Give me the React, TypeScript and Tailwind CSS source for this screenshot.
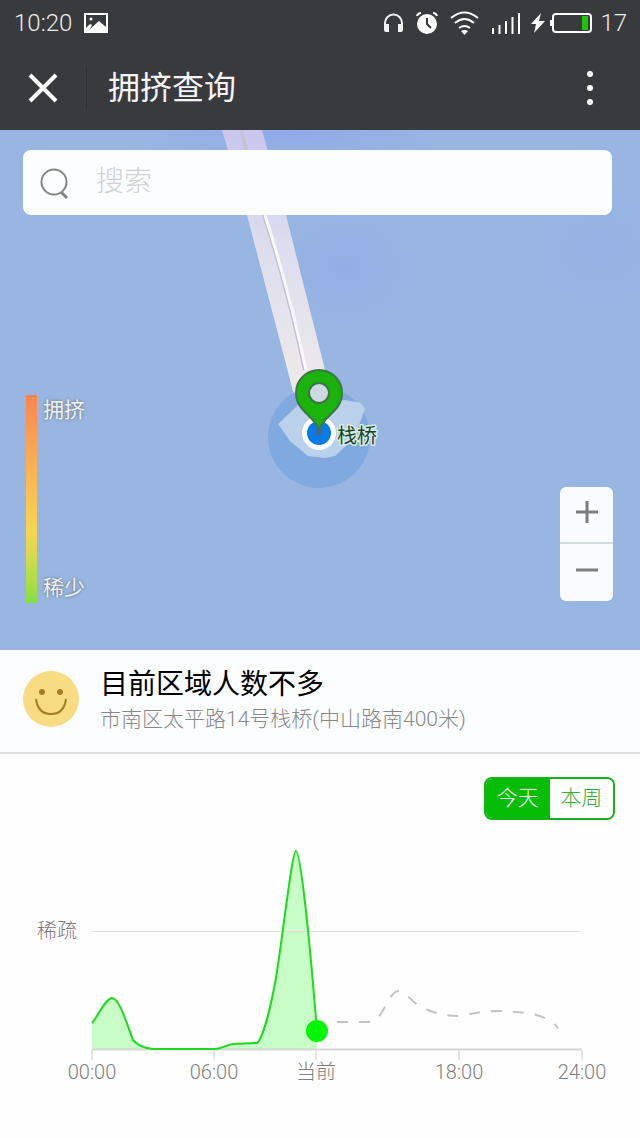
import { useState } from "react";

// STATUS BAR

function StatusBar() {
  return (
    <div className="flex h-[46px] items-center justify-between pl-[14px] pr-[13px] text-2xl font-light text-[#ececec]">
      <div className="flex items-center gap-3">
        <span>10:20</span>
        <svg width="24" height="20" viewBox="0 0 24 20">
          <rect x="1" y="1" width="22" height="18" fill="none" stroke="#fff" strokeWidth="2" />
          <circle cx="7" cy="6" r="1.5" fill="#fff" />
          <path d="M2 18v-3l4-4 2 1-2 4 9-8 7 6v4z" fill="#fff" />
        </svg>
      </div>
      <div className="flex items-center">
        <svg className="mr-3" width="21" height="22" viewBox="0 0 21 22" fill="none">
          <path d="M2 17v-6a8.5 8.5 0 0 1 17 0v6" stroke="#f1f1f1" strokeWidth="2" />
          <path d="M1 12h5v8H3q-2 0-2-2zM20 12h-5v8h3q2 0 2-2z" fill="#f1f1f1" />
        </svg>
        <svg className="mr-3" width="22" height="24" viewBox="0 0 22 24">
          <circle cx="11" cy="13" r="10" fill="#fff" />
          <path d="M1 5q1-3 4-3M21 5q-1-3-4-3" fill="none" stroke="#fff" strokeWidth="2" />
          <path d="M11 7v6l4 4" fill="none" stroke="#393a3e" strokeWidth="2" />
        </svg>
        <svg className="mr-3" width="29" height="26" viewBox="0 0 29 26" fill="none" stroke="#fff" strokeWidth="2">
          <path d="M1 8q13.5-11 27 0M5 13q9.5-8 19 0M9 18q5.5-4 11 0" />
          <path d="M11 21q3.5-2 7 0l-3.5 4z" fill="#fff" stroke="none" />
        </svg>
        <svg className="mr-2" width="31" height="24" viewBox="0 0 31 24" stroke="#fff" strokeWidth="2">
          <path d="M2 17v6M8.5 14v9M15 10v13M21.5 6v17M28 2v21" />
        </svg>
        <svg className="mr-1" width="16" height="20" viewBox="0 0 16 20">
          <path d="M11 0 1 11h5l-2 9L15 8H9z" fill="#fff" />
        </svg>
        <svg className="mr-2" width="42" height="22" viewBox="0 0 42 22">
          <rect x="3" y="2" width="38" height="18" rx="3" fill="none" stroke="#fff" strokeWidth="2" />
          <path d="M1 8v6" stroke="#fff" strokeWidth="2" />
          <rect x="32" y="4" width="6" height="14" fill="#1fc40c" />
        </svg>
        <span>17</span>
      </div>
    </div>
  );
}

function TitleBar() {
  return (
    <div className="flex h-[84px] items-center pl-7 pr-9">
      <button aria-label="关闭">
        <svg width="30" height="30" viewBox="0 0 30 30" stroke="#fff" strokeWidth="4">
          <path d="M2 2l26 26M28 2 2 28" />
        </svg>
      </button>
      <div className="ml-7 mr-[21px] h-11 w-px bg-[#2f3033]" />
      <h1 className="flex-1 text-[32px] leading-10 text-[#f4f4f4]">拥挤查询</h1>
      <button aria-label="更多" className="flex w-7 flex-col items-center gap-2">
        <span className="h-1.5 w-1.5 rounded-full bg-white" />
        <span className="h-1.5 w-1.5 rounded-full bg-white" />
        <span className="h-1.5 w-1.5 rounded-full bg-white" />
      </button>
    </div>
  );
}

// MAP

function MapCanvas() {
  return (
    <svg className="absolute inset-0 h-full w-full" viewBox="0 0 640 520" preserveAspectRatio="xMidYMid slice">
      <defs>
        <linearGradient id="pier" x1="0" y1="0" x2="0" y2="1">
          <stop offset="0" stopColor="#c9c6ee" />
          <stop offset="0.4" stopColor="#dcdcee" />
          <stop offset="1" stopColor="#efece9" />
        </linearGradient>
        <radialGradient id="haze">
          <stop offset="0" stopColor="#8faae8" />
          <stop offset="1" stopColor="#8faae8" stopOpacity="0" />
        </radialGradient>
      </defs>
      <rect width="640" height="520" fill="#99b6e2" />
      <ellipse cx="345" cy="137" rx="75" ry="65" fill="url(#haze)" opacity="0.7" />
      <ellipse cx="290" cy="5" rx="160" ry="32" fill="url(#haze)" />
      <ellipse cx="600" cy="120" rx="80" ry="70" fill="url(#haze)" opacity="0.4" />
      <circle cx="319" cy="307" r="51" fill="#7fa9df" />
      <path d="M278 294l20-19 47-5 16 3 4 6-3 8-5 14-11 15-11 10-10 2-17-2-18-15z" fill="#b9d1ea" />
      <path d="M222 0h40l24 85 39 155v25l-20 10-12-14-46-176z" fill="url(#pier)" />
      <path d="M241 0l23 85q24 75 41 155" fill="none" stroke="#c3c2d6" strokeWidth="4" />
      <path d="M265 85q24 75 41 155" fill="none" stroke="#f8f7fa" strokeWidth="3" />
      <circle cx="319" cy="303" r="17" fill="#fff" />
      <circle cx="319" cy="303" r="12" fill="#087be8" />
      <circle cx="319" cy="263" r="11" fill="#cfd9e4" />
      <path
        fillRule="evenodd"
        d="M319 301c-3-15-23-19-23-38a23 23 0 0 1 46 0c0 19-20 23-23 38zM319 253a10 10 0 1 0 0 20 10 10 0 0 0 0-20z"
        fill="#1ab20b"
        stroke="#3b7548"
        strokeWidth="2"
      />
      <circle cx="319" cy="302" r="3" fill="#536477" />
      <text x="337" y="313" fontSize="20" fill="#19442c" stroke="#dceee4" strokeWidth="3" strokeLinejoin="round" paintOrder="stroke">
        栈桥
      </text>
    </svg>
  );
}

function MapPanel() {
  return (
    <section className="relative flex h-[520px] flex-col justify-between overflow-hidden pt-5 pb-[47px]">
      <MapCanvas />
      <label className="relative ml-[23px] mr-7 flex h-[65px] items-center rounded-lg bg-[#fbfdfe] pl-4">
        <svg width="32" height="36" viewBox="0 0 32 36" fill="none" stroke="#858585">
          <circle cx="15" cy="17" r="12.5" strokeWidth="2" />
          <path d="M22 27l6 6" strokeWidth="3" />
        </svg>
        <input
          type="search"
          aria-label="搜索"
          placeholder="搜索"
          className="ml-[25px] h-full min-w-0 flex-1 bg-transparent pb-0.5 text-[28px] font-light outline-none placeholder:text-[#d2d2d2]"
        />
      </label>
      <div className="relative flex items-end justify-between pl-[26px] pr-[27px]">
        <div className="flex h-[208px] gap-[6px]">
          <div className="w-[11px] bg-linear-to-b from-[#fb8550] via-[#f9d454] via-65% to-[#85df42]" />
          <div className="flex flex-col justify-between text-[21px] leading-[30px] text-[#eef2f2] text-shadow-[0_0_3px_#58615f]">
            <span>拥挤</span>
            <span>稀少</span>
          </div>
        </div>
        <div className="mb-0.5 flex w-[53px] flex-col divide-y-2 divide-[#d5dadf] overflow-hidden rounded-md bg-[#f9fbfe]">
          <button aria-label="放大" className="flex h-[57px] items-center justify-center">
            <svg width="22" height="28" viewBox="0 0 22 28" stroke="#7d7d7d" strokeWidth="3">
              <path d="M0 11h22M11 0v22" />
            </svg>
          </button>
          <button aria-label="缩小" className="flex h-[57px] items-center justify-center">
            <svg width="22" height="28" viewBox="0 0 22 28" stroke="#7d7d7d" strokeWidth="3">
              <path d="M0 11h22" />
            </svg>
          </button>
        </div>
      </div>
    </section>
  );
}

function PlaceInfo() {
  return (
    <section className="flex h-[104px] items-center border-b-2 border-[#dedede] bg-[#fbfdfe] pb-1 pl-[23px]">
      <svg className="mr-[21px] shrink-0" width="56" height="56" viewBox="0 0 56 56">
        <circle cx="28" cy="28" r="28" fill="#f8dc83" />
        <circle cx="19" cy="21" r="3" fill="#a17e28" />
        <circle cx="37" cy="21" r="3" fill="#a17e28" />
        <path d="M13 28q2 15 15 15t15-15" fill="none" stroke="#a17e28" strokeWidth="2" />
      </svg>
      <div>
        <h2 className="text-[28px] leading-10 text-black">目前区域人数不多</h2>
        <p className="text-[21px] leading-7 font-light text-[#888]">市南区太平路14号栈桥(中山路南400米)</p>
      </div>
    </section>
  );
}

// CHART

const ticks = [
  { x: 92, label: "00:00" },
  { x: 214, label: "06:00" },
  { x: 316, label: "当前" },
  { x: 459, label: "18:00" },
  { x: 582, label: "24:00" },
];

const curve =
  "M92 203C99 195 105 179 112 178C119 178 126 201 133 220Q140 228 153 229L214 229C222 229 225 225 233 224L257 223C264 217 272 180 276 158C283 115 292 31 296 31C300 31 308 100 317 211";

function CrowdChart() {
  return (
    <svg className="block w-full" viewBox="0 0 640 280" role="img" aria-label="人数趋势">
      <path d={curve + "V229H92Z"} fill="#c8fdc8" />
      <path d="M92 111.5H581" stroke="#dedede" />
      <path d="M92 229.5H582" stroke="#d6d6d6" strokeWidth="2" />
      {ticks.map((t) => (
        <g key={t.label}>
          <path d={`M${t.x} 230v10`} stroke="#e4e4e4" strokeWidth="2" />
          <text x={t.x} y="259" textAnchor="middle" fontSize="20" fontWeight="300" fill="#808080">
            {t.label}
          </text>
        </g>
      ))}
      <text x="37" y="118" fontSize="20" fontWeight="300" fill="#80767c">
        稀疏
      </text>
      <path d={curve} fill="none" stroke="#1ddb1d" strokeWidth="2" />
      <path
        d="M337 202H368C384 202 387 173 398 171C408 172 412 184 425 189C440 195 450 196 459 196C475 193 485 191 500 191C520 192 545 192 558 208"
        fill="none"
        stroke="#c6c2c6"
        strokeWidth="2"
        strokeDasharray="11 11"
      />
      <circle cx="317" cy="211" r="11" fill="#04f604" />
    </svg>
  );
}

export default function App() {
  const [range, setRange] = useState("today");

  const on = "bg-[#06bd06] text-white";
  const off = "bg-white text-[#2fae3c]";

  return (
    <main className="min-h-screen bg-[#fefefe] font-[Roboto,'Noto_Sans_CJK_SC',sans-serif]">
      <header className="bg-[#393a3e]">
        <StatusBar />
        <TitleBar />
      </header>
      <MapPanel />
      <PlaceInfo />
      <section>
        <div className="flex justify-end pt-[23px] pr-[25px]">
          <div className="flex h-[43px] w-[131px] overflow-hidden rounded-lg border-2 border-[#14b31b] text-[21px] font-light">
            <button onClick={() => setRange("today")} className={"w-1/2 " + (range === "today" ? on : off)}>
              今天
            </button>
            <button onClick={() => setRange("week")} className={"w-1/2 " + (range === "week" ? on : off)}>
              本周
            </button>
          </div>
        </div>
        <CrowdChart />
      </section>
    </main>
  );
}
